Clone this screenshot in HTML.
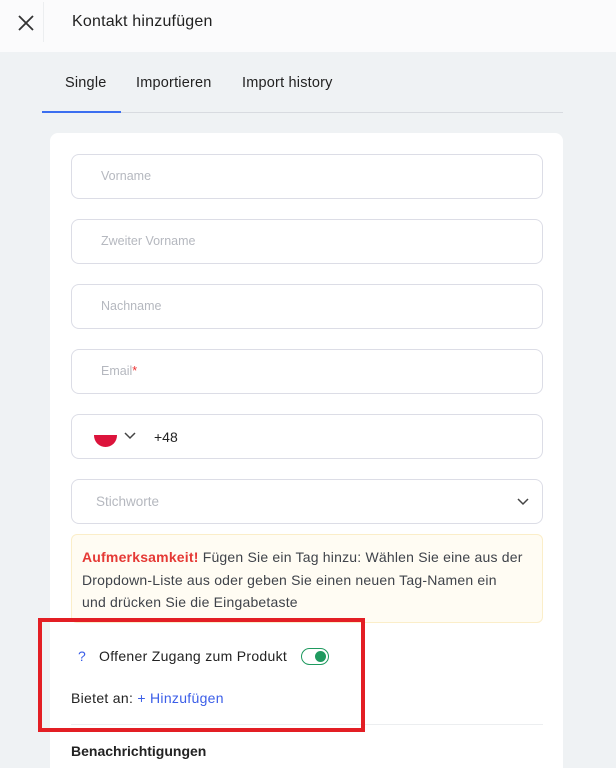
<!DOCTYPE html>
<html><head><meta charset="utf-8"><style>
*{box-sizing:border-box;margin:0;padding:0}
html,body{width:616px;height:768px;overflow:hidden}
body{background:#eff2f4;font-family:"Liberation Sans",sans-serif;position:relative;color:#222}
.hdr{position:absolute;left:0;top:0;width:616px;height:52px;background:#fbfbfc}
.sep{position:absolute;left:43px;top:2px;width:1px;height:40px;background:#eceef0}
.title{position:absolute;left:72px;top:13px;font-size:16px;color:#222;letter-spacing:0.2px}
.tab{position:absolute;top:75px;font-size:14.5px;color:#222;letter-spacing:0.2px}
.line{position:absolute;left:42px;top:112px;width:521px;height:1px;background:#d8dbe0}
.act{position:absolute;left:42px;top:111px;width:79px;height:2px;background:#3b6ef0}
.card{position:absolute;left:50px;top:133px;width:513px;height:635px;background:#fff;border-radius:8px 8px 0 0}
.in{position:absolute;left:71px;width:472px;height:45px;border:1px solid #dcdde6;border-radius:8px;font-size:12.5px;color:#b5b8bf;padding:14px 0 0 29px}
.alert{position:absolute;left:71px;top:534px;width:472px;height:89px;background:#fffcf3;border:1px solid #fbeec9;border-radius:6px;padding:11px 10px;font-size:14px;line-height:22.5px;color:#3f434a;letter-spacing:0.2px;white-space:nowrap}
.red{position:absolute;left:38px;top:618px;width:327px;height:114px;border:4px solid #e31e24}
</style></head><body>
<div class="hdr"><svg style="position:absolute;left:16px;top:13px" width="20" height="20" viewBox="0 0 20 20"><path d="M3 3L17 17M17 3L3 17" stroke="#333" stroke-width="1.8"/></svg><div class="sep"></div><div class="title">Kontakt hinzufügen</div></div>
<div class="tab" style="left:65px">Single</div>
<div class="tab" style="left:136px">Importieren</div>
<div class="tab" style="left:242px">Import history</div>
<div class="line"></div><div class="act"></div>
<div class="card"></div>
<div class="in" style="top:154px">Vorname</div>
<div class="in" style="top:219px">Zweiter Vorname</div>
<div class="in" style="top:284px">Nachname</div>
<div class="in" style="top:349px">Email<span style="color:#e33">*</span></div>
<div class="in" style="top:414px;padding:0"><div style="position:absolute;left:22px;top:20px;width:23px;height:12px;background:#dc143c;border-radius:0 0 12px 12px"></div><svg style="position:absolute;left:51px;top:16px" width="14" height="10"><path d="M2 2l5 5 5-5" stroke="#444" stroke-width="1.5" fill="none"/></svg><span style="position:absolute;left:82px;top:14px;color:#222;font-size:14px">+48</span></div>
<div class="in" style="top:479px;padding-left:24px;font-size:13.5px">Stichworte<svg style="position:absolute;right:12px;top:17px" width="14" height="10"><path d="M2 2l5 5 5-5" stroke="#444" stroke-width="1.5" fill="none"/></svg></div>
<div class="alert"><b style="color:#e53935">Aufmerksamkeit!</b> Fügen Sie ein Tag hinzu: Wählen Sie eine aus der<br>Dropdown-Liste aus oder geben Sie einen neuen Tag-Namen ein<br>und drücken Sie die Eingabetaste</div>
<div style="position:absolute;left:78px;top:648px;font-size:14px;color:#3b5ee8">?</div>
<div style="position:absolute;left:99px;top:648px;font-size:14px;letter-spacing:0.3px">Offener Zugang zum Produkt</div>
<div style="position:absolute;left:301px;top:648px;width:28px;height:17px;border:1.5px solid #1f9a5f;border-radius:9px"><div style="position:absolute;right:2px;top:2px;width:11px;height:11px;border-radius:50%;background:#1f9a5f"></div></div>
<div style="position:absolute;left:71px;top:690px;font-size:14px;letter-spacing:0.3px">Bietet an: <span style="color:#3b5ee8">+ Hinzufügen</span></div>
<div style="position:absolute;left:71px;top:724px;width:472px;height:1px;background:#eceef0"></div>
<div style="position:absolute;left:71px;top:743px;font-size:14px;font-weight:bold;color:#222">Benachrichtigungen</div>
<div class="red"></div>
</body></html>
